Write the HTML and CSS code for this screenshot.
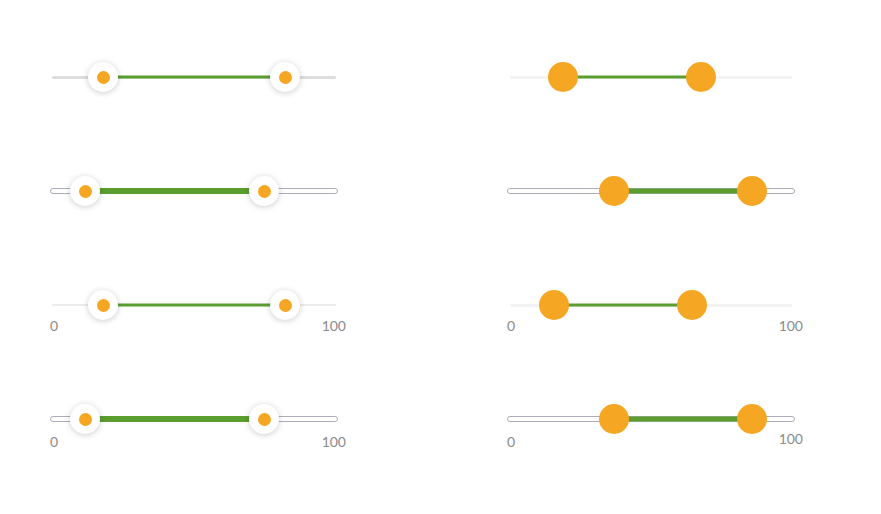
FILE: index.html
```html
<!DOCTYPE html>
<html lang="en">
<head>
<meta charset="UTF-8" />
<meta name="viewport" content="width=device-width, initial-scale=1.0">
<title>Range sliders</title>
<link rel="stylesheet" href="styles.css">
</head>
<body>
<main class="grid">
  <!-- row 1 -->
  <div class="cell">
    <div class="slider" style="--a:53px;--b:235px">
      <div class="track track--plain"></div>
      <div class="fill"></div>
      <span class="thumb"></span><span class="thumb thumb--b"></span>
    </div>
  </div>
  <div class="cell">
    <div class="slider" style="--a:55.7px;--b:194px">
      <div class="track track--faint"></div>
      <div class="fill"></div>
      <span class="thumb thumb--solid"></span><span class="thumb thumb--solid thumb--b"></span>
    </div>
  </div>

  <!-- row 2 -->
  <div class="cell">
    <div class="slider" style="--a:35px;--b:214px">
      <div class="track track--outline"></div>
      <div class="fill fill--thick"></div>
      <span class="thumb"></span><span class="thumb thumb--b"></span>
    </div>
  </div>
  <div class="cell">
    <div class="slider" style="--a:107px;--b:245px">
      <div class="track track--outline"></div>
      <div class="fill fill--mid"></div>
      <span class="thumb thumb--solid"></span><span class="thumb thumb--solid thumb--b"></span>
    </div>
  </div>

  <!-- row 3 -->
  <div class="cell">
    <div class="slider" style="--a:53px;--b:235px">
      <div class="track track--light"></div>
      <div class="fill"></div>
      <span class="thumb"></span><span class="thumb thumb--b"></span>
    </div>
    <div class="labels labels--tight"><span>0</span><span>100</span></div>
  </div>
  <div class="cell">
    <div class="slider" style="--a:47px;--b:185px">
      <div class="track track--faint"></div>
      <div class="fill"></div>
      <span class="thumb thumb--solid"></span><span class="thumb thumb--solid thumb--b"></span>
    </div>
    <div class="labels labels--tight"><span>0</span><span>100</span></div>
  </div>

  <!-- row 4 -->
  <div class="cell">
    <div class="slider" style="--a:35px;--b:214px">
      <div class="track track--outline"></div>
      <div class="fill fill--thick"></div>
      <span class="thumb"></span><span class="thumb thumb--b"></span>
    </div>
    <div class="labels"><span>0</span><span>100</span></div>
  </div>
  <div class="cell">
    <div class="slider" style="--a:107px;--b:245px">
      <div class="track track--outline"></div>
      <div class="fill fill--mid"></div>
      <span class="thumb thumb--solid"></span><span class="thumb thumb--solid thumb--b"></span>
    </div>
    <div class="labels"><span>0</span><span class="lbl-up">100</span></div>
  </div>
</main>
</body>
</html>
```

FILE: styles.css
```css
:root{
  --orange:#f5a623;
  --green:#5b9e2f;
  --label:#8a8a8a;
}
*,*::before,*::after{box-sizing:border-box;margin:0;padding:0}
body{
  background:#fff;
  font-family:Lato,'Liberation Sans',sans-serif;
}

/* GRID */
.grid{
  display:grid;
  grid-template-columns:288px 288px;
  grid-auto-rows:114px;
  column-gap:169px;
  padding:62px 0 0 50px;
}

/* SLIDER */
.slider{
  position:relative;
  height:30px;
  display:flex;
  align-items:center;
}
.track{flex:1;border-radius:3px}
.track--plain{height:3px;margin:0 2px;background:#dddddd}
.track--light{height:2px;margin:0 2px;background:#ececec}
.track--faint{height:3px;margin:0 3px;background:#f3f3f3}
.track--outline{height:6px;background:#fff;border:1px solid #aeabbd}

.fill{
  position:absolute;top:50%;
  left:var(--a);width:calc(var(--b) - var(--a));
  height:3px;transform:translateY(-50%);
  background:var(--green);
}
.fill--thick{height:6px}
.fill--mid{height:5px}

/* THUMBS */
.thumb{
  position:absolute;top:0;left:var(--a);
  width:30px;height:30px;margin-left:-15px;
  border-radius:50%;
  background:#fff;
  box-shadow:0 1px 6px rgba(0,0,0,.2);
  display:flex;align-items:center;justify-content:center;
}
.thumb::after{
  content:'';
  width:13px;height:13px;border-radius:50%;
  background:var(--orange);
}
.thumb--b{left:var(--b)}
.thumb--solid{background:var(--orange);box-shadow:none}
.thumb--solid::after{display:none}

/* LABELS */
.labels{
  display:flex;justify-content:space-between;align-items:flex-start;
  margin-right:-8px;
  font-size:14px;line-height:16px;
  color:var(--label);
}
.labels--tight{margin-top:-2px}
.lbl-up{margin-top:-3px}
```
